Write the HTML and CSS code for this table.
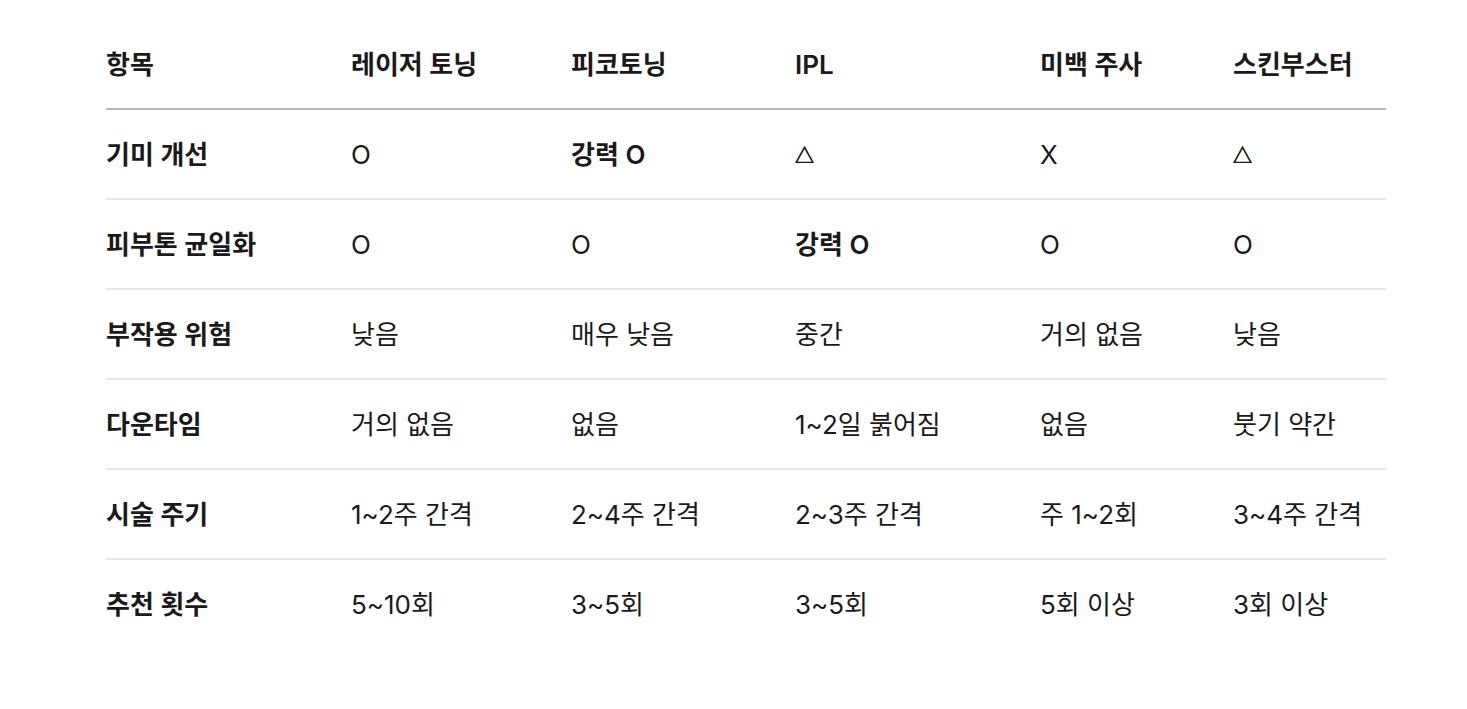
FILE: index.html
```html
<!DOCTYPE html>
<html lang="ko">
<head>
<meta charset="utf-8">
<link rel="stylesheet" href="styles.css">
</head>
<body>
<div class="wrap">
<table class="cmp">
<colgroup>
<col class="c1"><col class="c2"><col class="c3"><col class="c4"><col class="c5"><col class="c6">
</colgroup>
<thead>
<tr><th>항목</th><th>레이저 토닝</th><th>피코토닝</th><th>IPL</th><th>미백 주사</th><th>스킨부스터</th></tr>
</thead>
<tbody>
<tr><td class="k">기미 개선</td><td>O</td><td class="b">강력 O</td><td><span class="tri">△</span></td><td>X</td><td><span class="tri">△</span></td></tr>
<tr><td class="k">피부톤 균일화</td><td>O</td><td>O</td><td class="b">강력 O</td><td>O</td><td>O</td></tr>
<tr><td class="k">부작용 위험</td><td>낮음</td><td>매우 낮음</td><td>중간</td><td>거의 없음</td><td>낮음</td></tr>
<tr><td class="k">다운타임</td><td>거의 없음</td><td>없음</td><td>1~2일 붉어짐</td><td>없음</td><td>붓기 약간</td></tr>
<tr><td class="k">시술 주기</td><td>1~2주 간격</td><td>2~4주 간격</td><td>2~3주 간격</td><td>주 1~2회</td><td>3~4주 간격</td></tr>
<tr class="last"><td class="k">추천 횟수</td><td>5~10회</td><td>3~5회</td><td>3~5회</td><td>5회 이상</td><td>3회 이상</td></tr>
</tbody>
</table>
</div>
</body>
</html>
```
FILE: styles.css
```css
html, body {
  margin: 0;
  padding: 0;
  background: #ffffff;
}
body {
  font-family: "Inter", "Noto Sans CJK KR", "Noto Sans", sans-serif;
  color: #1a1a1a;
}
.wrap {
  padding: 20px 0 0 106px;
}
.cmp {
  border-collapse: collapse;
  table-layout: fixed;
  width: 1280px;
  font-size: 26px;
}
.c1 { width: 245px; }
.c2 { width: 220px; }
.c3 { width: 224px; }
.c4 { width: 245px; }
.c5 { width: 193px; }
.c6 { width: 153px; }
.cmp th, .cmp td {
  height: 86px;
  padding: 2px 0 0;
  text-align: left;
  vertical-align: middle;
  line-height: 36px;
  white-space: nowrap;
}
.cmp th {
  font-weight: 600;
  border-bottom: 2px solid #b8b8b8;
}
.cmp td {
  font-weight: 400;
  border-bottom: 2px solid #e6e6e6;
}
.cmp tr.last td {
  border-bottom: none;
}
.cmp td.k, .cmp td.b {
  font-weight: 600;
}
.tri {
  font-family: "Noto Sans CJK KR", sans-serif;
  font-size: 19px;
  -webkit-text-stroke: 0.7px #1a1a1a;
  display: inline-block;
  vertical-align: 1px;
}
```
